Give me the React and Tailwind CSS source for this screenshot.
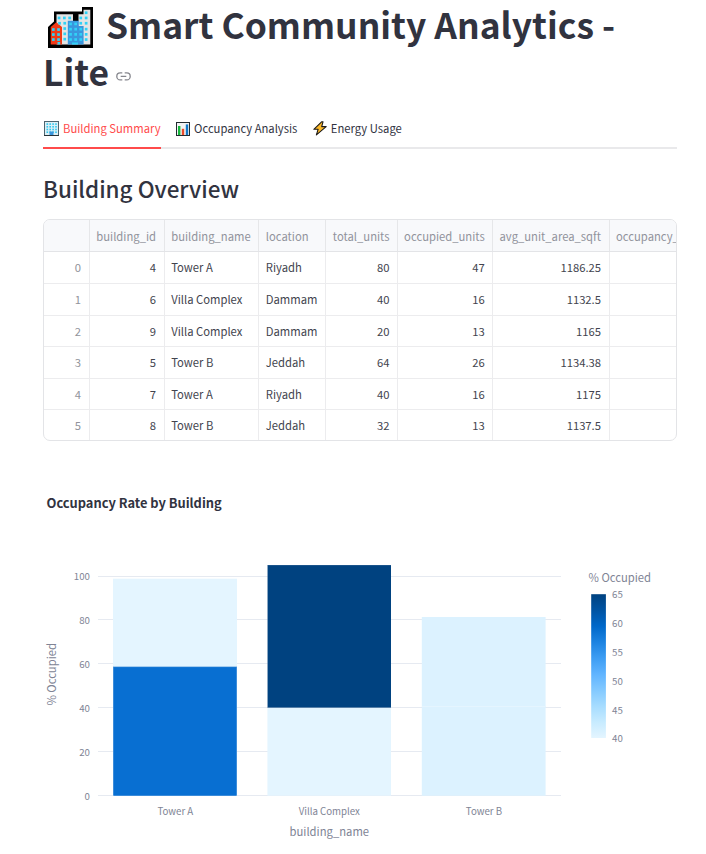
import React from "react";

const columns = [
  { name: "", width: "w-[46px]", pad: "pr-2 text-right" },
  { name: "building_id", width: "w-[75px]", pad: "pr-2 text-right" },
  { name: "building_name", width: "w-[94px]", pad: "pl-[6.2px]" },
  { name: "location", width: "w-[67px]", pad: "pl-[6.8px]" },
  { name: "total_units", width: "w-[72px]", pad: "pr-[7.5px] text-right" },
  { name: "occupied_units", width: "w-[95px]", pad: "pr-[7.3px] text-right" },
  { name: "avg_unit_area_sqft", width: "w-[117px]", pad: "pr-2 text-right" },
  { name: "occupancy_", width: "w-[110px]", pad: "pl-[6px]" },
];

const rows = [
  { h: "h-8", cells: ["0", "4", "Tower A", "Riyadh", "80", "47", "1186.25", ""] },
  { h: "h-8", cells: ["1", "6", "Villa Complex", "Dammam", "40", "16", "1132.5", ""] },
  { h: "h-[31px]", cells: ["2", "9", "Villa Complex", "Dammam", "20", "13", "1165", ""] },
  { h: "h-8", cells: ["3", "5", "Tower B", "Jeddah", "64", "26", "1134.38", ""] },
  { h: "h-[31px]", cells: ["4", "7", "Tower A", "Riyadh", "40", "16", "1175", ""] },
  { h: "h-[31px]", cells: ["5", "8", "Tower B", "Jeddah", "32", "13", "1137.5", ""] },
];

function Cityscape() {
  const windows = [];
  const add = (xs, ys) =>
    xs.forEach((x) => ys.forEach((y) => windows.push(<rect key={x + "-" + y} x={x} y={y} width="2.7" height="2.7" />)));
  add([9.7, 15, 20.3], [9.6]);
  add([10.2, 15.4], [14.9]);
  add([15.4], [20.2, 25.5, 30.8]);
  add([31.4], [9.6, 14.9, 20.8, 26, 31.2]);
  add([36.8], [4.4, 9.6, 14.9, 20.8, 26, 31.2]);
  add([21.2, 26.3], [15.6, 20.8, 26, 31.2]);
  add([4, 9.2], [21.2, 26.2, 31.2]);
  return (
    <svg width="46" height="42" viewBox="0 0 46 42" className="shrink-0">
      <path d="M6 4.5H34V0H45V41H0V20L6 14.5Z" fill="#000" />
      <path d="M8.5 7.2H25V14H30.5V7.2H35.5V2.7H42.3V37.5H8.5Z" fill="#e4e4e4" />
      <path d="M19.8 13.8H30.8V19H35.6V37.5H19.8Z" fill="#3a96dd" />
      <path d="M2.7 37.5V20L8.3 15.3L14 20V37.5Z" fill="#f03a17" />
      <g fill="#31d2f7">{windows}</g>
      <path d="M9.5 35h2.7v2.5H9.5ZM24 35.5h6v2H24Z" fill="#31d2f7" />
    </svg>
  );
}

function OfficeIcon() {
  return (
    <svg width="15" height="15" viewBox="0 0 15 15">
      <rect width="15" height="15" fill="#4c6570" />
      <rect x="1" y="1" width="13" height="13" fill="#dceff5" />
      <g fill="#30c8ef">
        {[2.5, 5.4, 8.3, 11.2].map((x) => [2.3, 5, 7.7, 10.4].map((y) => <rect key={x + "," + y} x={x} y={y} width="1.6" height="1.6" />))}
      </g>
      <path d="M5.5 10.5H9.5V14H5.5Z" fill="#3a96dd" />
      <path d="M0 14H15V15H0Z" fill="#263238" />
    </svg>
  );
}

function ChartIcon() {
  return (
    <svg width="14" height="14" viewBox="0 0 14 14">
      <rect width="14" height="14" fill="#222b30" />
      <rect x="1" y="1" width="12" height="12" fill="#f1f3f4" />
      <rect x="2" y="4" width="2.4" height="9" fill="#16b83d" />
      <rect x="5.8" y="6.8" width="2.4" height="6.2" fill="#e84a2a" />
      <rect x="9.8" y="2.4" width="2.4" height="10.6" fill="#0f78c8" />
    </svg>
  );
}

function BoltIcon() {
  return (
    <svg width="14" height="15" viewBox="0 0 14 15">
      <path d="M8.6 .8L.8 8.3H5.1L3.4 13.9L13.2 5.6H8.7L10 .8Z" fill="#fcb827" stroke="#1c1a18" strokeWidth="1.1" strokeLinejoin="round" />
    </svg>
  );
}

function LinkIcon() {
  return (
    <svg width="15" height="9" viewBox="0 0 15 9" fill="none" stroke="#85868d" strokeWidth="1.3">
      <path d="M6.3 .9H4.2A3.4 3.5 0 0 0 4.2 7.9H6.3M8.7 .9H10.8A3.4 3.5 0 0 1 10.8 7.9H8.7M4.7 4.4H10.3" />
    </svg>
  );
}

function DataTable() {
  return (
    <div className="mt-[13px] h-[222px] overflow-hidden rounded-[7px] border border-[#e3e4e7] text-[11.25px]">
      <div className="flex h-8 w-[676px] border-b border-[#e3e4e7] bg-[#f8f9fb] text-[#91939b]">
        {columns.map((c) => (
          <div key={c.name} className={`${c.width} ${c.pad} shrink-0 whitespace-nowrap border-r border-[#e6e7e9] leading-[33px]`}>
            {c.name}
          </div>
        ))}
      </div>
      {rows.map((r) => (
        <div key={r.cells[0]} className={`${r.h} flex w-[676px] border-b border-[#ececee] text-[#42444e]`}>
          {r.cells.map((v, i) => (
            <div
              key={i}
              className={`${columns[i].width} ${columns[i].pad} ${i === 0 ? "text-[#91939b]" : ""} shrink-0 whitespace-nowrap border-r border-[#ececee] leading-[31px]`}
            >
              {v}
            </div>
          ))}
        </div>
      ))}
    </div>
  );
}

const yTicks = [
  [0, 795.5],
  [20, 751.5],
  [40, 707.5],
  [60, 663.5],
  [80, 619.5],
  [100, 576.5],
];

const scaleTicks = [
  [65, 594.5],
  [60, 623.5],
  [55, 652.5],
  [50, 681.3],
  [45, 709.8],
  [40, 738.5],
];

function OccupancyChart() {
  return (
    <svg width="634" height="314" viewBox="43 540 634 314" className="block" fill="#808495">
      <defs>
        <linearGradient id="blues" x1="0" y1="1" x2="0" y2="0">
          <stop offset="0" stopColor="#e4f5ff" />
          <stop offset=".111" stopColor="#c7ebff" />
          <stop offset=".222" stopColor="#a6dcff" />
          <stop offset=".333" stopColor="#83c9ff" />
          <stop offset=".444" stopColor="#60b4ff" />
          <stop offset=".556" stopColor="#3d9df3" />
          <stop offset=".667" stopColor="#1c83e1" />
          <stop offset=".778" stopColor="#0068c9" />
          <stop offset=".889" stopColor="#0054a3" />
          <stop offset="1" stopColor="#004280" />
        </linearGradient>
      </defs>
      {yTicks.map(([v, y]) => (
        <g key={v}>
          <path d={`M98 ${y}H561`} stroke="#e6eaf1" />
          <text x="90" y={v === 100 ? y + 3.8 : y + 4.1} textAnchor="end" fontSize="9.7">{v}</text>
        </g>
      ))}
      <rect x="113" y="578.7" width="124" height="88" fill="#e4f5ff" />
      <rect x="113" y="666.6" width="124" height="129.1" fill="#3d8dda" />
      <rect x="114" y="667.2" width="122" height="128.3" fill="#086fd2" />
      <rect x="267.4" y="707.7" width="123.6" height="88" fill="#e4f5ff" />
      <rect x="267.4" y="565" width="123.6" height="142.8" fill="#416f9c" />
      <rect x="268" y="565.4" width="123" height="141.7" fill="#004280" />
      <rect x="421.8" y="617" width="123.8" height="178.7" fill="#dcf2ff" />
      <path d="M422 706.5H545.6" stroke="#e5f5ff" />
      <g fontSize="9.7" textAnchor="middle">
        <text x="175.3" y="815">Tower A</text>
        <text x="329.3" y="815">Villa Complex</text>
        <text x="484" y="815">Tower B</text>
      </g>
      <text x="329.3" y="836" fontSize="11.25" textAnchor="middle">building_name</text>
      <text transform="translate(56 674.3) rotate(-90)" fontSize="11.25" textAnchor="middle">% Occupied</text>
      <text x="588.5" y="582" fontSize="11.25">% Occupied</text>
      <rect x="591.2" y="594.2" width="14.7" height="143.8" fill="url(#blues)" />
      {scaleTicks.map(([v, y]) => (
        <text key={v} x="612" y={y + 3.9} fontSize="9.7">{v}</text>
      ))}
    </svg>
  );
}

export default function App() {
  return (
    <main className="h-[854px] w-[706px] bg-white pl-[43px] pr-[29px] font-['Noto_Sans_CJK_SC','Noto_Sans',sans-serif] text-[#31333f]">
      <h1 className="h-[94px] text-[35.4px] font-bold">
        <span className="flex h-[47px] items-start leading-[48px]">
          <span className="ml-[5px] mr-[12px] mt-[7px]">
            <Cityscape />
          </span>
          <span className="whitespace-nowrap">Smart Community Analytics -</span>
        </span>
        <span className="flex h-[47px] items-start leading-[48px]">
          Lite
          <span className="ml-[7px] mt-[25px] leading-none">
            <LinkIcon />
          </span>
        </span>
      </h1>
      <nav className="mt-[16px] flex h-[39px] gap-[15px] border-b-2 border-[#e9e9eb] text-[11.25px] leading-[17px]">
        <div className="-mb-[2px] flex items-center gap-[4px] border-b-2 border-[#ff4b4b] pl-px text-[#ff4b4b]">
          <OfficeIcon />
          <span className="-mt-px">Building Summary</span>
        </div>
        <div className="flex items-center gap-[4.5px]">
          <ChartIcon />
          <span className="-mt-px">Occupancy Analysis</span>
        </div>
        <div className="flex items-center gap-[4px] pl-[0.5px]">
          <BoltIcon />
          <span className="-mt-px">Energy Usage</span>
        </div>
      </nav>
      <h2 className="mt-[22px] h-[35px] text-[22.45px] font-medium leading-[35px]">Building Overview</h2>
      <DataTable />
      <h3 className="ml-[3.5px] mt-[52px] h-[20px] text-[12.85px] font-bold leading-5">Occupancy Rate by Building</h3>
      <div className="mt-[27px]">
        <OccupancyChart />
      </div>
    </main>
  );
}
